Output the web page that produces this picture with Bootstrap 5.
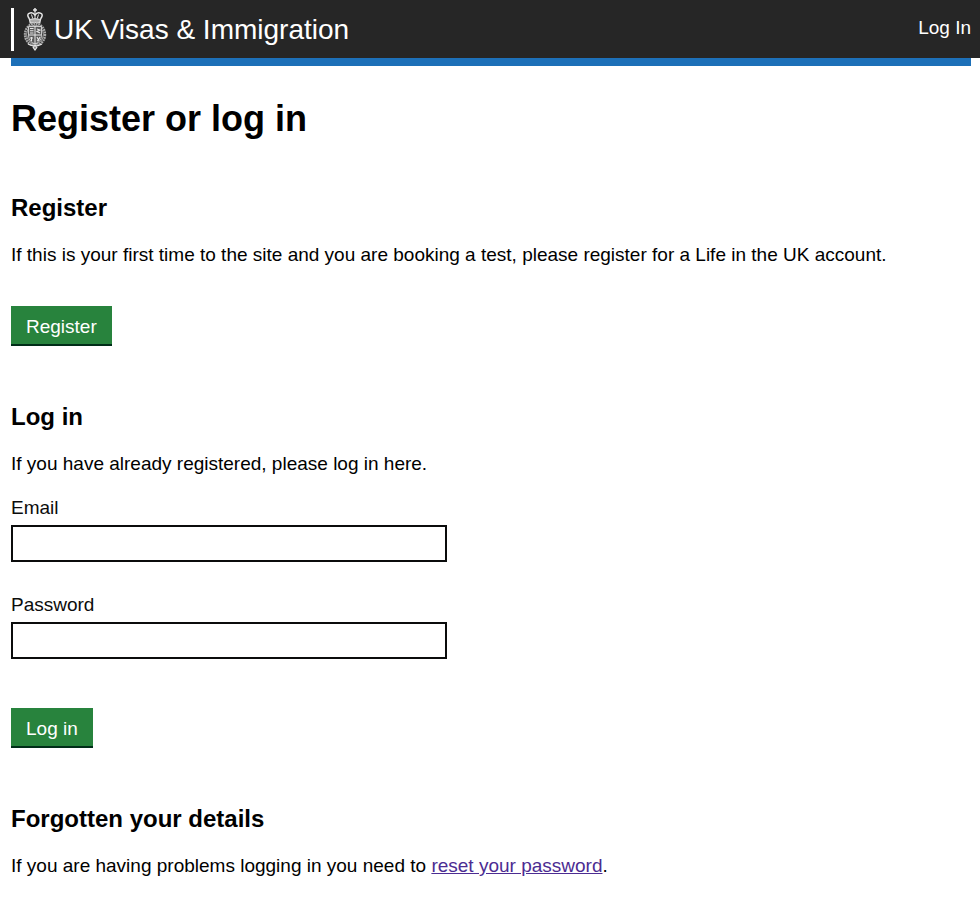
<!DOCTYPE html>
<html lang="en">
<head>
<meta charset="utf-8">
<meta name="viewport" content="width=device-width, initial-scale=1">
<title>Register or log in</title>
<link href="https://cdn.jsdelivr.net/npm/bootstrap@5.3.0/dist/css/bootstrap.min.css" rel="stylesheet">
<style>
body { font-family: "Liberation Sans", Arial, sans-serif; font-size: 19px; line-height: 25px; color: #000; background: #fff; }
.site-shell { padding-left: 11px; padding-right: 9px; }
.site-header { background: #262626; min-height: 58px; }
.site-brand { gap: 7px; font-size: 28px; line-height: 43px; color: #fff; border-left: 3px solid #fff; padding-left: 9px; }
.site-brand:hover, .site-login:hover { color: #fff; }
.site-login { color: #fff; }
.site-bar { height: 8px; background: #1d70b8; }
h1 { font-size: 36px; line-height: 42px; font-weight: 700; margin: 32px 0 53px; }
h2 { font-size: 24px; line-height: 30px; font-weight: 700; margin: 0 0 19px; }
.page-section { margin-bottom: 56px; }
.page-section p { margin: 0; }
.intro { padding-bottom: 39px; }
.field { margin-top: 30px; max-width: 436px; }
.field:first-of-type { margin-top: 19px; }
.field .form-label { color: #0b0c0c; margin-bottom: 5px; }
.field .form-control { height: 37px; border: 2px solid #0b0c0c; padding: 5px; font-size: 19px; line-height: 25px; color: #0b0c0c; }
.btn-action { background: #28833d; color: #fff; font-size: 19px; line-height: 24px; padding: 9px 15px 5px; border: 0; border-bottom: 2px solid #002d18; }
.btn-action:hover { background: #005a30; color: #fff; border-color: #002d18; }
.form-action { margin-top: 49px; }
.reset-link { color: #4c2c92; }
</style>
<script src="https://cdn.jsdelivr.net/npm/bootstrap@5.3.0/dist/js/bootstrap.bundle.min.js" defer></script>
</head>
<body>
<header class="site-header site-shell d-flex align-items-center justify-content-between">
  <a class="site-brand d-flex align-items-center text-decoration-none" href="#">
    <svg width="24" height="43" viewBox="0 0 24 43" fill="none" stroke="#e6e6e6" aria-hidden="true">
      <path d="M12 0v4M10 2h4" stroke-width="1.500"/>
      <path d="M6.500 11Q2.800 6 7 5Q10 4 12 7Q14 4 17 5Q21.200 6 17.500 11" stroke-width="1.500"/>
      <path d="M12 4v7M8.500 6.500l1.200 4M15.500 6.500l-1.200 4" stroke-width="1"/>
      <path d="M6.500 11.500Q12 10 17.500 11.500L16.800 15Q12 14 7.200 15Z" fill="#aaa" stroke-width="1.200"/>
      <ellipse cx="12" cy="26.500" rx="10" ry="11" stroke="#aaa" stroke-width="2.400" stroke-dasharray="1.800 .7"/>
      <ellipse cx="12" cy="26.500" rx="8.300" ry="9.300" stroke="#ccc" stroke-width=".8"/>
      <path d="M5.500 18.500h13v9q0 6-6.500 8.500-6.500-2.500-6.500-8.500z" fill="#5a5a5a" stroke-width=".8"/>
      <path d="M12 18v18M5.500 27h13" stroke-width="1"/>
      <path d="M7 20.500h3.500M7 22.700h3.500M7 25h3.500M14 21l3 1-3 1.500 3 1.500M8.500 29v4M7 30h3M14 29l1.500 3 1.500-3M14 33l2-1" stroke-width="1.100"/>
      <path d="M5 36q7 4 14 0M12 37l-1.800 2.500 1.800 2.500 1.800-2.500z" fill="#888" stroke-width="1.200"/>
    </svg>
    <span>UK Visas &amp; Immigration</span>
  </a>
  <nav class="pb-1" aria-label="Account"><a class="site-login d-block text-decoration-none" href="#login">Log In</a></nav>
</header>
<main class="site-shell">
  <div class="site-bar"></div>
  <h1>Register or log in</h1>
  <section class="page-section">
    <h2>Register</h2>
    <p class="intro">If this is your first time to the site and you are booking a test, please register for a Life in the UK account.</p>
    <button type="button" class="btn btn-action rounded-0 d-block">Register</button>
  </section>
  <section class="page-section" id="login">
    <h2>Log in</h2>
    <p>If you have already registered, please log in here.</p>
    <form>
      <div class="field">
        <label class="form-label d-block" for="email">Email</label>
        <input class="form-control rounded-0" type="email" id="email" autocomplete="email">
      </div>
      <div class="field">
        <label class="form-label d-block" for="password">Password</label>
        <input class="form-control rounded-0" type="password" id="password" autocomplete="current-password">
      </div>
      <button type="submit" class="btn btn-action rounded-0 d-block form-action">Log in</button>
    </form>
  </section>
  <section>
    <h2>Forgotten your details</h2>
    <p>If you are having problems logging in you need to <a class="reset-link" href="#">reset your password</a>.</p>
  </section>
</main>
</body>
</html>
